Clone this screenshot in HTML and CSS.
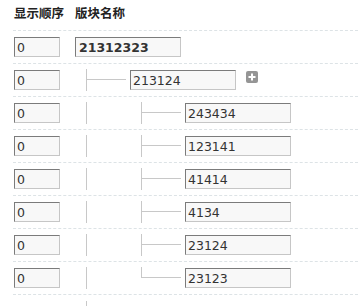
FILE: index.html
```html
<!DOCTYPE html>
<html>
<head>
  <title>版块管理</title>
  <link rel="stylesheet" href="styles.css">
</head>
<body>
  <div class="board-list">
    <div class="row head">
      <div class="col-order">显示顺序</div>
      <div class="col-name">版块名称</div>
    </div>

    <div class="row">
      <div class="col-order"><input class="txt order" type="text" value="0"></div>
      <div class="col-name"><input class="txt name top" type="text" value="21312323"></div>
    </div>

    <div class="row">
      <div class="col-order"><input class="txt order" type="text" value="0"></div>
      <div class="col-name">
        <span class="indent branch"></span>
        <input class="txt name" type="text" value="213124">
        <a class="add-btn" href="#" title="添加子版块">
          <svg width="12" height="12" viewBox="0 0 12 12">
            <rect x="0" y="0" width="12" height="12" rx="2" fill="#959595"/>
            <rect x="5" y="2.5" width="2" height="7" fill="#fff"/>
            <rect x="2.5" y="5" width="7" height="2" fill="#fff"/>
          </svg>
        </a>
      </div>
    </div>

    <div class="row">
      <div class="col-order"><input class="txt order" type="text" value="0"></div>
      <div class="col-name">
        <span class="indent pipe"></span><span class="indent branch"></span>
        <input class="txt name" type="text" value="243434">
      </div>
    </div>

    <div class="row">
      <div class="col-order"><input class="txt order" type="text" value="0"></div>
      <div class="col-name">
        <span class="indent pipe"></span><span class="indent branch"></span>
        <input class="txt name" type="text" value="123141">
      </div>
    </div>

    <div class="row">
      <div class="col-order"><input class="txt order" type="text" value="0"></div>
      <div class="col-name">
        <span class="indent pipe"></span><span class="indent branch"></span>
        <input class="txt name" type="text" value="41414">
      </div>
    </div>

    <div class="row">
      <div class="col-order"><input class="txt order" type="text" value="0"></div>
      <div class="col-name">
        <span class="indent pipe"></span><span class="indent branch"></span>
        <input class="txt name" type="text" value="4134">
      </div>
    </div>

    <div class="row">
      <div class="col-order"><input class="txt order" type="text" value="0"></div>
      <div class="col-name">
        <span class="indent pipe"></span><span class="indent branch"></span>
        <input class="txt name" type="text" value="23124">
      </div>
    </div>

    <div class="row">
      <div class="col-order"><input class="txt order" type="text" value="0"></div>
      <div class="col-name">
        <span class="indent pipe"></span><span class="indent last"></span>
        <input class="txt name" type="text" value="23123">
      </div>
    </div>

    <div class="row tail">
      <div class="col-order"></div>
      <div class="col-name">
        <span class="indent pipe"></span>
      </div>
    </div>
  </div>
</body>
</html>
```

FILE: styles.css
```css
body {
  margin: 0;
  font-family: "DejaVu Sans", Verdana, sans-serif;
  font-size: 12.5px;
  color: #333;
  background: #fff;
}

.board-list {
  margin-left: 13px;
}

.row {
  display: flex;
  align-items: center;
  height: 32px;
  padding-left: 1px;
  border-bottom: 1px dashed #dde3e6;
}

.row.head {
  height: 30px;
  align-items: flex-start;
  line-height: 26px;
  font-family: "Noto Sans CJK SC", sans-serif;
  font-weight: bold;
  font-size: 12.5px;
  color: #222;
}

/* only the top of the next row is in view */
.row.tail {
  height: 11px;
  align-items: flex-start;
  overflow: hidden;
  border-bottom: none;
}

.row.tail .indent {
  margin-top: 6px;
}

.col-order {
  width: 61px;
  flex: none;
}

.col-name {
  display: flex;
  align-items: center;
}

.txt {
  box-sizing: border-box;
  height: 20px;
  margin: 0;
  padding: 0 2px;
  border: 1px solid;
  border-color: #7b7b7b #c6c6c6 #c6c6c6 #7b7b7b;
  background: #f8f8f8;
  font-family: "DejaVu Sans", Verdana, sans-serif;
  font-size: 12.5px;
  color: #333;
  outline: none;
}

.txt.order {
  width: 46px;
}

.txt.name {
  width: 106px;
}

.txt.top {
  font-weight: bold;
  padding-left: 3px;
}

.indent {
  flex: none;
  display: block;
  width: 44px;
  height: 22px;
  margin-left: 11px;
}

.indent.pipe {
  border-left: 1px solid #c8c8c8;
  width: 43px;
}

.indent.branch {
  border-left: 1px solid #c8c8c8;
  width: 43px;
  background: linear-gradient(#c8c8c8, #c8c8c8) no-repeat 0 10px / 39px 1px;
}

.indent.last {
  background:
    linear-gradient(#c8c8c8, #c8c8c8) no-repeat 0 0 / 1px 11px,
    linear-gradient(#c8c8c8, #c8c8c8) no-repeat 0 10px / 40px 1px;
}

.add-btn {
  display: block;
  margin-left: 10px;
  margin-top: -6px;
  line-height: 0;
}
```
